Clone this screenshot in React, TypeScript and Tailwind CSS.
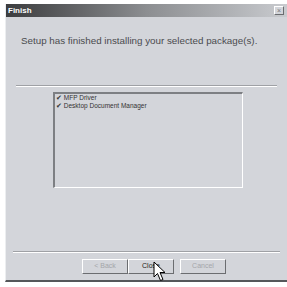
import React from "react";

const font = { fontFamily: '"Liberation Sans", Arial, sans-serif' };

const Button = ({ label, active }: { label: string; active?: boolean }) => (
   <div
      className={`w-[46px] h-[15px] flex items-center justify-center text-[7px] border border-t-white border-l-white border-r-[#6b6d70] border-b-[#6b6d70] ${
         active ? "text-[#222]" : "text-[#a4a6aa]"
      }`}
   >
      {label}
   </div>
);

export default function App() {
   return (
      <div className="w-[287px] h-[287px] bg-white overflow-hidden relative" style={font}>
         <div className="absolute left-[5px] top-[4px] w-[282px] h-[278px] flex flex-col bg-[#d3d5da] border-b-2 border-[#55575a] border-l border-l-[#eceef0]">
            <div className="h-[13px] flex items-center justify-between pl-[2px] pr-[3px] bg-gradient-to-r from-[#3c3d3f] via-[#8c8e91] to-[#c9cbcf]">
               <span className="text-white font-bold text-[8px]">Finish</span>
               <div className="w-[10px] h-[9px] bg-[#d3d5da] border border-t-white border-l-white border-r-[#6b6d70] border-b-[#6b6d70] flex items-center justify-center text-[7px] leading-none text-[#777]">
                  ×
               </div>
            </div>
            <div className="pl-[15px] pt-[17px] text-[9.8px] text-[#4a4b4e]">
               Setup has finished installing your selected package(s).
            </div>
            <div className="mx-[10px] mt-[36px] h-[2px] border-t border-[#9fa1a5] border-b border-b-white" />
            <div className="ml-[47px] mt-[5px] w-[190px] h-[96px] border border-t-[#7d7f83] border-l-[#7d7f83] border-r-white border-b-white border-l-2 border-t-2 pl-[1px] text-[6.5px] leading-[8px] text-[#333]">
               <div>✔ MFP Driver</div>
               <div>✔ Desktop Document Manager</div>
            </div>
            <div className="mx-[7px] mt-[63px] h-[2px] border-t border-[#9fa1a5] border-b border-b-white" />
            <div className="flex gap-[6px] ml-[76px] mt-[6px]">
               <div className="flex">
                  <Button label="< Back" />
                  <Button label="Close" active />
               </div>
               <Button label="Cancel" />
            </div>
            <svg className="absolute left-[147px] top-[257px]" width="14" height="22" viewBox="0 0 14 22">
               <path d="M1 1 L1 16 L4.5 12.5 L7.5 19.5 L10 18.5 L7 11.5 L12 11.5 Z" fill="white" stroke="black" strokeWidth="1" />
            </svg>
         </div>
      </div>
   );
}
